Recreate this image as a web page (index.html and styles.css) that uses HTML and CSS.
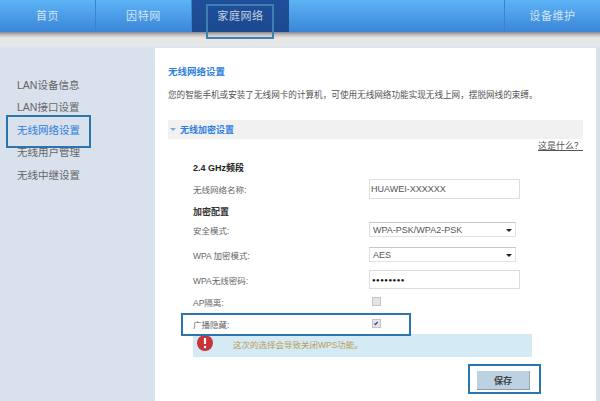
FILE: index.html
```html
<!DOCTYPE html>
<html lang="zh">
<head>
<meta charset="utf-8">
<title>无线网络设置</title>
<link rel="stylesheet" href="styles.css">
</head>
<body>
<div class="page">
  <nav class="nav">
    <a class="tab">首页</a>
    <a class="tab">因特网</a>
    <a class="tab active">家庭网络</a>
    <span class="nav-fill"></span>
    <a class="tab last">设备维护</a>
  </nav>
  <div class="band"></div>
  <div class="body">
    <aside class="side">
      <a class="side-item">LAN设备信息</a>
      <a class="side-item">LAN接口设置</a>
      <a class="side-item current">无线网络设置</a>
      <a class="side-item">无线用户管理</a>
      <a class="side-item">无线中继设置</a>
    </aside>
    <main class="main">
      <h1 class="title">无线网络设置</h1>
      <p class="intro">您的智能手机或安装了无线网卡的计算机，可使用无线网络功能实现无线上网，摆脱网线的束缚。</p>
      <div class="section"><span class="tri"></span>无线加密设置</div>
      <div class="help"><a>这是什么？</a></div>
      <div class="form">
        <div class="group">2.4 GHz频段</div>
        <div class="row r-name"><label>无线网络名称:</label><div class="input">HUAWEI-XXXXXX</div></div>
        <div class="group g2">加密配置</div>
        <div class="row r-mode"><label>安全模式:</label><div class="select">WPA-PSK/WPA2-PSK<span class="arrow"></span></div></div>
        <div class="row r-enc"><label>WPA 加密模式:</label><div class="select">AES<span class="arrow"></span></div></div>
        <div class="row r-pass"><label>WPA无线密码:</label><div class="input pass">●●●●●●●●</div></div>
        <div class="row r-ap"><label>AP隔离:</label><span class="check"></span></div>
        <div class="row r-hide"><label>广播隐藏:</label><span class="check"><svg viewBox="0 0 8 8" width="8" height="8"><path d="M2.5 4.4 3.6 5.6 5.6 2.8" fill="none" stroke="#2a3f8f" stroke-width="1.2"/></svg></span></div>
      </div>
      <div class="alert">
        <svg class="alert-icon" viewBox="0 0 18 18" width="18" height="18"><circle cx="9" cy="9" r="8" fill="#c8343a"/><path d="M9 4v6" stroke="#fff" stroke-width="2.2"/><circle cx="9" cy="13" r="1.2" fill="#fff"/></svg>
        <span>这次的选择会导致关闭WPS功能。</span>
      </div>
      <div class="actions"><button class="save">保存</button></div>
    </main>
  </div>
  <div class="mark m-nav"></div>
  <div class="mark m-side"></div>
  <div class="mark m-hide"></div>
  <div class="mark m-save"></div>
</div>
</body>
</html>
```
FILE: styles.css
```css
* { box-sizing: border-box; }
html, body { margin: 0; padding: 0; }
body { width: 600px; height: 401px; overflow: hidden; font-family: "Liberation Sans", "Noto Sans CJK SC", sans-serif; color: #555; background: #fff; }
.page { position: relative; width: 600px; height: 401px; display: flex; flex-direction: column; }

.nav { display: flex; height: 32px; background: linear-gradient(#5cb3f6, #3a86d8); flex: none; }
.tab { width: 96px; display: flex; justify-content: center; align-items: center; padding-bottom: 3px; font-size: 11px; letter-spacing: 0.6px; color: #d5e4f2; border-right: 1px solid #3b84cc; }
.tab.active { width: 97px; background: linear-gradient(#1f4f9a, #1b4a90); color: #c3d2e2; border-right: 0; }
.tab.last { border-right: 0; border-left: 1px solid #3b84cc; width: 96px; }
.nav-fill { flex: 1; }

.band { height: 16px; flex: none; background: linear-gradient(#8a8a8a 0, #c4c4c4 3px, #e6e6e6 6px, #e9e9e9 13px, #e0e6ee 14px, #dbe3ee 16px); }

.body { flex: 1; display: flex; background: #d8e1ec; padding-right: 4px; min-height: 0; }
.side { width: 155px; flex: none; padding-top: 25px; display: flex; flex-direction: column; }
.side-item { height: 22.5px; padding-left: 17px; display: flex; align-items: center; font-size: 10.5px; color: #666; }
.side-item.current { color: #2f7de0; }

.main { flex: 1; min-width: 0; background: #fff; padding: 16px 13px 0 13px; display: flex; flex-direction: column; }
.title { margin: 0; font-size: 9.5px; line-height: 16px; font-weight: bold; color: #2f7fe0; }
.intro { margin: 7px 0 0; font-size: 8.6px; line-height: 16px; color: #555; white-space: nowrap; }
.section { margin-top: 17px; height: 19px; background: #f1f1f1; display: flex; align-items: center; font-size: 9px; font-weight: bold; color: #2f7fe0; padding-left: 2px; }
.tri { width: 0; height: 0; border-left: 3px solid transparent; border-right: 3px solid transparent; border-top: 3px solid #7fa9d8; margin-right: 4px; }
.help { height: 14px; display: flex; justify-content: flex-end; font-size: 9px; line-height: 14px; color: #555; }
.help a { text-decoration: underline; }

.form { padding-left: 25px; display: flex; flex-direction: column; margin-top: 7px; }
.group { height: 16px; line-height: 16px; font-size: 9px; font-weight: bold; color: #222; }
.group.g2 { color: #333; margin-top: 5px; }
.row { display: flex; align-items: center; font-size: 8.5px; color: #666; }
.row label { width: 176px; flex: none; }
.r-name { margin-top: 3px; height: 20px; }
.r-mode { margin-top: 2px; height: 15px; }
.r-enc { margin-top: 10px; height: 15px; }
.r-pass { margin-top: 8px; height: 19px; }
.r-ap { margin-top: 7px; height: 11px; }
.r-hide { margin-top: 11px; height: 11px; }
.input { width: 151px; height: 100%; border: 1px solid #dedede; display: flex; align-items: center; padding-left: 1px; font-size: 9px; color: #555; }
.pass { font-size: 6px; color: #111; letter-spacing: 0.5px; padding-left: 2px; border-color: #ddd; }
.select { position: relative; width: 147px; height: 100%; border: 1px solid #e2e2e2; border-top-color: #c8c8c8; display: flex; align-items: center; padding-left: 3px; font-size: 9px; color: #555; }
.arrow { position: absolute; right: 3px; top: 6px; width: 0; height: 0; border-left: 3px solid transparent; border-right: 3px solid transparent; border-top: 3px solid #222; }
.check { width: 9px; height: 9px; margin-left: 3px; border: 1px solid #c4c4c4; background: #e4e4e4; display: block; }
.check svg { display: block; margin: -1px; }

.alert { margin: 5px 0 0 25px; width: 339px; height: 23px; background: #d4ebf6; display: flex; align-items: center; font-size: 8.5px; color: #c09a52; }
.alert-icon { margin: -5px 0 0 3px; flex: none; }
.alert span { margin-left: 19px; margin-top: -3px; }
.actions { margin-top: 14px; padding-left: 309px; }
.save { width: 53px; height: 19px; padding: 0; border: 0; border-right: 1px solid #9aa; border-bottom: 1px solid #8d99a5; background: #bcd2e2; font-family: "Liberation Serif", "Noto Sans CJK SC", serif; font-size: 9px; font-weight: bold; color: #444; display: block; }

.mark { position: absolute; border: 2px solid #2c74ad; pointer-events: none; }
.m-nav { left: 206px; top: 4px; width: 68px; height: 35px; border-color: #3d7fae; }
.m-side { left: 6px; top: 115px; width: 85px; height: 33px; }
.m-hide { left: 181px; top: 313px; width: 230px; height: 23px; }
.m-save { left: 468px; top: 364px; width: 73px; height: 30px; }
```
